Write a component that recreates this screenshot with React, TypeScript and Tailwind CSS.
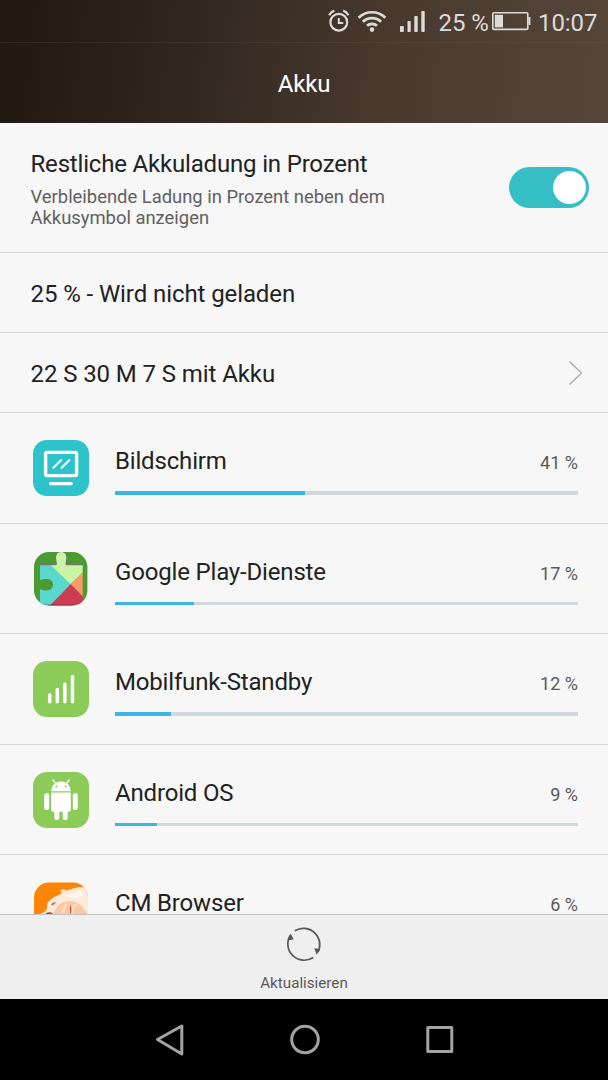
import { useState, type ReactNode } from "react";

interface UsageItem {
  name: string;
  percent: number;
  icon: ReactNode;
}

function AlarmIcon() {
  return (
    <svg width="22" height="24" viewBox="0 0 22 24" fill="none" stroke="currentColor">
      <circle cx="10.8" cy="13.2" r="8.4" strokeWidth="2.2" />
      <path d="M10.8 9v4.900h4.400" strokeWidth="2" />
      <path d="M1.200 6.200C2.200 4 4 2.400 6.400 1.600M20.400 6.200C19.400 4 17.600 2.400 15.200 1.600" strokeWidth="2.200" />
    </svg>
  );
}

function WifiIcon() {
  return (
    <svg width="30" height="24" viewBox="0 0 30 24" fill="none" stroke="currentColor" strokeWidth="2.700">
      <path d="M1.600 8.800a19 19 0 0 1 26.800 0" />
      <path d="M5.800 12.800a13.100 13.100 0 0 1 18.400 0" />
      <path d="M10 16.800a7.200 7.200 0 0 1 10 0" />
      <circle cx="15" cy="20.600" r="2.300" fill="currentColor" stroke="none" />
    </svg>
  );
}

function SignalIcon() {
  return (
    <svg width="26" height="24" viewBox="0 0 26 24" fill="currentColor">
      <rect x="0" y="17" width="3.800" height="6" rx="0.800" />
      <rect x="7.500" y="12" width="3.200" height="11" rx="0.800" />
      <rect x="14.300" y="7" width="3.400" height="16" rx="0.800" />
      <rect x="21.300" y="2" width="3.400" height="21" rx="0.800" />
    </svg>
  );
}

function BatteryIcon() {
  return (
    <svg width="39" height="20" viewBox="0 0 39 20" fill="currentColor">
      <rect x="0.800" y="1.800" width="35" height="16.600" rx="1" fill="none" stroke="currentColor" strokeWidth="1.600" />
      <rect x="2.800" y="3.800" width="8.200" height="12.600" />
      <path d="M36.400 6h2v8h-2z" />
    </svg>
  );
}

function ScreenIcon() {
  return (
    <svg width="56" height="56" viewBox="0 0 56 56" fill="none" stroke="#fff" strokeLinecap="round">
      <rect width="56" height="56" rx="14" fill="#2cc3cb" stroke="none" />
      <rect x="12.600" y="12.400" width="31" height="23.200" rx="1.600" strokeWidth="3.400" />
      <path d="M20.400 27.800l7.600-7.600M28.600 27.800l7.600-7.600" strokeWidth="2.200" />
      <path d="M17.600 43.600h20.600" strokeWidth="3.200" />
    </svg>
  );
}

function PlayServicesIcon() {
  return (
    <svg width="56" height="56" viewBox="0 0 56 56">
      <defs>
        <clipPath id="play-clip">
          <rect x="1" y="1" width="53.400" height="53.400" rx="15" />
        </clipPath>
      </defs>
      <g clipPath="url(#play-clip)">
        <rect width="56" height="56" fill="#4b9b31" />
        <path d="M7 13.600h16V6c0-3 1-5 5-5s5 2 5 5v7.600h16" fill="none" stroke="#77707c" strokeWidth="1.300" />
        <path d="M7 14.200h15.500L37.700 33.300 18 54.400H7V38.500c2 .4 3.500 1 6 1 4.500 0 7-2 7-5.700s-2.500-5.700-7-5.700c-2.500 0-4 .6-6 1z" fill="#59d9ce" />
        <path d="M18 14.200h4.500c1.600 0 1.800-1.200 1-4C22.400 5.500 23.200 1 28.200 1s5.800 4.500 4.700 9.200c-.7 2.800-.6 4 1 4h15.800v7.200l-12 11.900z" fill="#c9f5a5" />
        <path d="M37.700 33.300l12-11.900v24z" fill="#f99b67" />
        <path d="M37.700 33.300l12 12.100v9H17z" fill="#cf3b50" />
        <path d="M8 54.200h40" stroke="#593a41" strokeWidth="1" />
      </g>
    </svg>
  );
}

function StandbyIcon() {
  return (
    <svg width="56" height="56" viewBox="0 0 56 56">
      <rect width="56" height="56" rx="14" fill="#8bcb57" />
      <path d="M16.700 34v6.800M24.300 28.600v12.200M31.900 23v17.800M39.500 15.600v25.200" stroke="#fff" strokeWidth="3.500" strokeLinecap="round" />
    </svg>
  );
}

function AndroidIcon() {
  return (
    <svg width="56" height="56" viewBox="0 0 56 56">
      <rect width="56" height="56" rx="14" fill="#8bcb57" />
      <g fill="#fff">
        <path d="M18.200 19.300C18.500 13.400 22.500 9.500 28 9.500s9.500 3.900 9.800 9.800z" />
        <path d="M18.200 20.400h19.600v17.400a2 2 0 0 1-2 2H20.200a2 2 0 0 1-2-2z" />
        <rect x="11.200" y="21" width="5" height="17" rx="2.500" />
        <rect x="39.800" y="21" width="5" height="17" rx="2.500" />
        <rect x="21.300" y="34" width="5" height="14" rx="2.300" />
        <rect x="29.700" y="34" width="5" height="14" rx="2.300" />
      </g>
      <path d="M20 8l2.800 3.800M36 8l-2.800 3.800" stroke="#fff" strokeWidth="1.400" strokeLinecap="round" />
      <circle cx="23.300" cy="14.600" r="1" fill="#8bcb57" />
      <circle cx="32.700" cy="14.600" r="1" fill="#8bcb57" />
    </svg>
  );
}

function BrowserIcon() {
  return (
    <svg width="56" height="56" viewBox="0 0 56 56">
      <defs>
        <clipPath id="browser-clip">
          <rect x="1" y="0.600" width="54" height="54" rx="15" />
        </clipPath>
      </defs>
      <g clipPath="url(#browser-clip)">
        <rect width="56" height="56" fill="#fb8506" />
        <path d="M5 33l7-3.500 2-3 .5-6L20 15.500l7-3.300 2.200-1-1.700-1.700c.4-2.600 3.600-3 5.500-.8l8-2.400L46 5l6 .5 4 5v45H4z" fill="#fdeadb" />
        <path d="M30 12.500c7 .5 13-1.500 18-4.500l3 5c-6 5-14 4-21-.5z" fill="#fff6ec" />
        <path d="M21 32c1-6 5-11 12-12.500 7-1.300 13 1 16 5l5 7v24H21z" fill="#f7c8a4" />
        <path d="M39 32c0-5 2-8 5-10M30 31c.5-4 2-7 4-9" fill="none" stroke="#fde2cb" strokeWidth="2" />
        <path d="M17.800 23.300l1.200-2 4-1.600-1.600 2.800z" fill="#e05a45" />
        <path d="M37 22.500l1.200 3.500v5.500h-1z" fill="#cc3b2b" />
        <path d="M12 33c1-3 5-3.500 8-1.500L19 35z" fill="#d1382f" />
      </g>
    </svg>
  );
}

const usage: UsageItem[] = [
  { name: "Bildschirm", percent: 41, icon: <ScreenIcon /> },
  { name: "Google Play-Dienste", percent: 17, icon: <PlayServicesIcon /> },
  { name: "Mobilfunk-Standby", percent: 12, icon: <StandbyIcon /> },
  { name: "Android OS", percent: 9, icon: <AndroidIcon /> },
  { name: "CM Browser", percent: 6, icon: <BrowserIcon /> },
];

function Header() {
  return (
    <header className="h-[123px] shrink-0 bg-[linear-gradient(97deg,#21180f_0%,#2b2119_20%,#3b2f26_46%,#4a3b30_66%,#544639_100%)]">
      <div className="flex h-[43px] items-start border-b border-[#76675730] pl-[328px] text-[#dddbd8]">
        <div className="mt-[9px]">
          <AlarmIcon />
        </div>
        <div className="mt-[9px] ml-[7px]">
          <WifiIcon />
        </div>
        <div className="mt-[9px] ml-[13px]">
          <SignalIcon />
        </div>
        <span className="mt-[8.500px] ml-[12.500px] w-[53.500px] text-[24px] leading-7 tracking-[-0.1px] whitespace-nowrap">
          25 %
        </span>
        <div className="mt-[11px]">
          <BatteryIcon />
        </div>
        <span className="mt-[8.500px] ml-[7px] text-[24px] leading-7 tracking-[-0.1px] whitespace-nowrap">10:07</span>
      </div>
      <h1 className="pt-[27px] text-center text-[24px] leading-7 tracking-[-0.2px] text-white">Akku</h1>
    </header>
  );
}

function UsageRow({ name, percent, icon }: UsageItem) {
  return (
    <li className="flex h-[110.6px] shrink-0 border-b border-[#d9d9d9] pr-[30px] pl-[33px]">
      <div className="mt-[27px] size-14 shrink-0">{icon}</div>
      <div className="ml-[26px] flex-1 pt-[34px]">
        <div className="flex justify-between">
          <span className="text-[24px] leading-7 tracking-[-0.17px]">{name}</span>
          <span className="pt-[5px] text-[18px] leading-[22px] text-[#585858]">{percent} %</span>
        </div>
        <div className="mt-4 h-[3.500px] bg-[#cfd9dc]">
          <div className="h-full bg-[#39b8e8]" style={{ width: `${percent}%` }} />
        </div>
      </div>
    </li>
  );
}

function NavBar() {
  return (
    <nav className="flex h-[81px] shrink-0 items-start bg-black pt-[23px] pl-[154px] text-[#a5a3a0]">
      <svg width="32" height="36" viewBox="0 0 32 36" fill="none" stroke="currentColor" strokeWidth="3" strokeLinejoin="round">
        <path d="M3.500 17.500L27.800 4v28z" />
      </svg>
      <svg className="ml-[102px]" width="34" height="36" viewBox="0 0 34 36" fill="none" stroke="currentColor" strokeWidth="3">
        <circle cx="17" cy="17.500" r="13.300" />
      </svg>
      <svg className="ml-[102px]" width="32" height="36" viewBox="0 0 32 36" fill="none" stroke="currentColor" strokeWidth="3" strokeLinejoin="round">
        <rect x="3.800" y="5.500" width="24" height="24" />
      </svg>
    </nav>
  );
}

export default function App() {
  const [showPercent, setShowPercent] = useState(true);

  return (
    <div className="flex h-[1080px] w-[608px] flex-col overflow-hidden bg-[#f7f7f7] font-[Roboto,sans-serif] text-[#222]">
      <Header />
      <main className="flex min-h-0 flex-1 flex-col overflow-hidden">
        <section className="flex h-[130px] shrink-0 justify-between border-b border-[#d9d9d9] pr-[19px] pl-[30.500px]">
          <div className="pt-[27px]">
            <h2 className="text-[24px] leading-7 tracking-[-0.18px] whitespace-nowrap">Restliche Akkuladung in Prozent</h2>
            <p className="mt-2 w-[380px] text-[18.400px] leading-[21px] text-[#606060]">
              Verbleibende Ladung in Prozent neben dem Akkusymbol anzeigen
            </p>
          </div>
          <button
            type="button"
            role="switch"
            aria-checked={showPercent}
            aria-label="Restliche Akkuladung in Prozent"
            onClick={() => setShowPercent(!showPercent)}
            className={`mt-11 flex h-[41px] w-20 items-center rounded-full px-[3.500px] ${
              showPercent ? "justify-end bg-[#35bfc4]" : "justify-start bg-[#c8c8c8]"
            }`}
          >
            <span className="size-[33px] rounded-full bg-white" />
          </button>
        </section>
        <section className="h-20 shrink-0 border-b border-[#d9d9d9] pt-[27px] pl-[30.500px] text-[24px] leading-7 tracking-[-0.09px]">
          25 % - Wird nicht geladen
        </section>
        <section className="flex h-20 shrink-0 justify-between border-b border-[#d9d9d9] pt-[27px] pr-[24px] pl-[30.500px] text-[24px] leading-7 tracking-[-0.09px]">
          <span>22 S 30 M 7 S mit Akku</span>
          <svg width="16" height="26" viewBox="0 0 16 26" fill="none" stroke="#a9a9a9" strokeWidth="1.300">
            <path d="M1.500 1.500L13.500 13l-12 11.500" />
          </svg>
        </section>
        <ul className="flex flex-col">
          {usage.map((item) => (
            <UsageRow key={item.name} {...item} />
          ))}
        </ul>
      </main>
      <footer className="flex h-[85px] shrink-0 flex-col items-center border-t border-[#c4c4c4] bg-[#efefef] pt-[10px] text-[#5a5856]">
        <svg width="38" height="38" viewBox="0 0 38 38" fill="none" stroke="currentColor" strokeWidth="1.700">
          <path d="M9.800 5.800A16.300 16.300 0 0 1 33 27" />
          <path d="M28.200 32.500A16.300 16.300 0 0 1 5.200 10.500" />
          <path d="M29.200 23.200l6 .8-3.600 5.800zM2.800 15.400l6-1.200-3.300-5.700z" fill="currentColor" stroke="none" />
        </svg>
        <span className="mt-[10px] text-[15.200px] leading-5">Aktualisieren</span>
      </footer>
      <NavBar />
    </div>
  );
}
